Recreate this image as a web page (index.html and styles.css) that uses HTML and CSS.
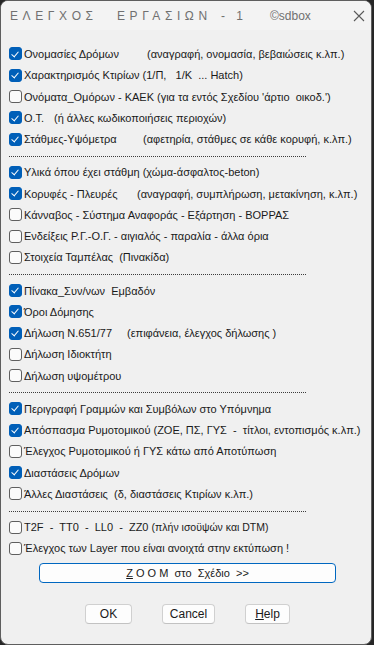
FILE: index.html
```html
<!DOCTYPE html>
<html lang="el">
<head>
<meta charset="utf-8">
<link rel="stylesheet" href="styles.css">
</head>
<body>
<div class="window">
  <div class="titlebar">
    <span class="t1">ΕΛΕΓΧΟΣ</span>
    <span class="t2">ΕΡΓΑΣΙΩΝ</span>
    <span class="t3">- 1</span>
    <span class="brand">©sdbox</span>
    <svg class="close" width="12" height="12" viewBox="0 0 12 12"><path d="M1 1L11 11M11 1L1 11" stroke="#5a5a5a" stroke-width="1.1" fill="none"/></svg>
  </div>
  <div class="content">
    <div class="group">
      <div class="row"><span class="cb on"></span><span class="lbl w123">Ονομασίες Δρόμων</span><span>(αναγραφή, ονομασία, βεβαιώσεις κ.λπ.)</span></div>
      <div class="row"><span class="cb on"></span><span class="lbl">Χαρακτηρισμός Κτιρίων (1/Π,&nbsp;&nbsp; 1/Κ&nbsp; ... Hatch)</span></div>
      <div class="row"><span class="cb"></span><span class="lbl w133">Ονόματα_Ομόρων - ΚΑΕΚ</span><span>(για τα εντός Σχεδίου 'άρτιο&nbsp; οικοδ.')</span></div>
      <div class="row"><span class="cb on"></span><span class="lbl w30">Ο.Τ.</span><span>(ή άλλες κωδικοποιήσεις περιοχών)</span></div>
      <div class="row"><span class="cb on"></span><span class="lbl w119">Στάθμες-Υψόμετρα</span><span>(αφετηρία, στάθμες σε κάθε κορυφή, κ.λπ.)</span></div>
    </div>
    <div class="sep"></div>
    <div class="group">
      <div class="row"><span class="cb on"></span><span class="lbl">Υλικά όπου έχει στάθμη (χώμα-άσφαλτος-beton)</span></div>
      <div class="row"><span class="cb on"></span><span class="lbl w113">Κορυφές - Πλευρές</span><span>(αναγραφή, συμπλήρωση, μετακίνηση, κ.λπ.)</span></div>
      <div class="row"><span class="cb"></span><span class="lbl">Κάνναβος - Σύστημα Αναφοράς - Εξάρτηση - ΒΟΡΡΑΣ</span></div>
      <div class="row"><span class="cb"></span><span class="lbl">Ενδείξεις Ρ.Γ.-Ο.Γ. - αιγιαλός - παραλία - άλλα όρια</span></div>
      <div class="row"><span class="cb"></span><span class="lbl">Στοιχεία Ταμπέλας&nbsp; (Πινακίδα)</span></div>
    </div>
    <div class="sep"></div>
    <div class="group">
      <div class="row"><span class="cb on"></span><span class="lbl">Πίνακα_Συν/νων&nbsp; Εμβαδόν</span></div>
      <div class="row"><span class="cb on"></span><span class="lbl">Όροι Δόμησης</span></div>
      <div class="row"><span class="cb on"></span><span class="lbl w103">Δήλωση Ν.651/77</span><span>(επιφάνεια, έλεγχος δήλωσης )</span></div>
      <div class="row"><span class="cb"></span><span class="lbl">Δήλωση Ιδιοκτήτη</span></div>
      <div class="row"><span class="cb"></span><span class="lbl">Δήλωση υψομέτρου</span></div>
    </div>
    <div class="sep"></div>
    <div class="group">
      <div class="row"><span class="cb on"></span><span class="lbl">Περιγραφή Γραμμών και Συμβόλων στο Υπόμνημα</span></div>
      <div class="row"><span class="cb on"></span><span class="lbl">Απόσπασμα Ρυμοτομικού (ΖΟΕ, ΠΣ, ΓΥΣ&nbsp; -&nbsp; τίτλοι, εντοπισμός κ.λπ.)</span></div>
      <div class="row"><span class="cb"></span><span class="lbl">Έλεγχος Ρυμοτομικού ή ΓΥΣ κάτω από Αποτύπωση</span></div>
      <div class="row"><span class="cb on"></span><span class="lbl">Διαστάσεις Δρόμων</span></div>
      <div class="row"><span class="cb"></span><span class="lbl">Άλλες Διαστάσεις&nbsp; (δ, διαστάσεις Κτιρίων κ.λπ.)</span></div>
    </div>
    <div class="sep"></div>
    <div class="group">
      <div class="row"><span class="cb"></span><span class="lbl">T2F&nbsp; -&nbsp; TT0&nbsp; -&nbsp; LL0&nbsp; -&nbsp; ZZ0&nbsp;</span><span class="small">(πλήν ισοϋψών και DTM)</span></div>
      <div class="row"><span class="cb"></span><span class="lbl">Έλεγχος των Layer που είναι ανοιχτά στην εκτύπωση !</span></div>
    </div>
    <div class="zoombtn"><span><u>Z</u> O O M</span>&nbsp; στο&nbsp; Σχέδιο&nbsp; &gt;&gt;</div>
    <div class="buttons">
      <div class="btn ok">OK</div>
      <div class="btn cancel">Cancel</div>
      <div class="btn help"><u>H</u>elp</div>
    </div>
  </div>
</div>
</body>
</html>
```
FILE: styles.css
```css
html, body {
  margin: 0;
  padding: 0;
  background: #262626;
}
body {
  width: 374px;
  height: 645px;
  overflow: hidden;
  font-family: "Liberation Sans", Arial, sans-serif;
  color: #1a1a1a;
}
.window {
  box-sizing: border-box;
  width: 372px;
  height: 645px;
  border: 1px solid #5e5e5e;
  border-radius: 8px;
  background: #f0f0f0;
  overflow: hidden;
  display: flex;
  flex-direction: column;
}
.titlebar {
  height: 29px;
  background: #f3f3f3;
  display: flex;
  align-items: center;
  font-size: 12px;
  color: #707070;
  flex: none;
}
.titlebar span { white-space: nowrap; }
.t1 { margin-left: 9px; width: 107px; letter-spacing: 4.6px; }
.t2 { width: 104px; letter-spacing: 4.6px; }
.t3 { width: 49px; letter-spacing: 4px; }
.brand { width: 83px; letter-spacing: 0; }
.close { flex: none; }
.content {
  padding: 13.3px 0 0 8px;
  font-size: 11px;
}
.group { display: flex; flex-direction: column; }
.row {
  height: 21.3px;
  display: flex;
  align-items: center;
  white-space: nowrap;
}
.lbl { margin-left: 2px; display: inline-block; }
.w123 { width: 123px; }
.w133 { width: 133px; }
.w30 { width: 30px; }
.w119 { width: 119px; }
.w113 { width: 113px; }
.w103 { width: 103px; }
.small { font-size: 10.5px; }
.cb {
  flex: none;
  box-sizing: border-box;
  width: 13px;
  height: 13px;
  border: 1px solid #5f5f5f;
  border-radius: 3px;
  background: #fbfbfb;
  position: relative;
}
.cb.on {
  border-color: #005fb8;
  background: #005fb8;
}
.cb.on::after {
  content: "";
  position: absolute;
  left: 3.2px;
  top: 1.2px;
  width: 3.2px;
  height: 6px;
  border: solid #fff;
  border-width: 0 1.1px 1.1px 0;
  transform: rotate(40deg);
}
.sep {
  margin: 6px 0 4.8px 0;
  width: 297px;
  height: 1px;
  background: repeating-linear-gradient(90deg, #3c3c3c 0 1px, transparent 1px 2px);
}
.zoombtn {
  box-sizing: border-box;
  margin: 4px 0 0 30px;
  width: 297px;
  height: 20px;
  border: 1px solid #0067c0;
  border-radius: 4px;
  background: #fdfdfd;
  display: flex;
  align-items: center;
  justify-content: center;
  font-size: 11px;
  white-space: nowrap;
}
.buttons {
  display: flex;
  margin: 21px 0 0 76px;
}
.btn {
  box-sizing: border-box;
  height: 20px;
  border: 1px solid #d0d0d0;
  border-bottom-color: #c2c2c2;
  border-radius: 4px;
  background: #fdfdfd;
  display: flex;
  align-items: center;
  justify-content: center;
  font-size: 12px;
}
.ok { width: 47px; }
.cancel { width: 53px; margin-left: 30px; }
.help { width: 45px; margin-left: 30px; }
```
